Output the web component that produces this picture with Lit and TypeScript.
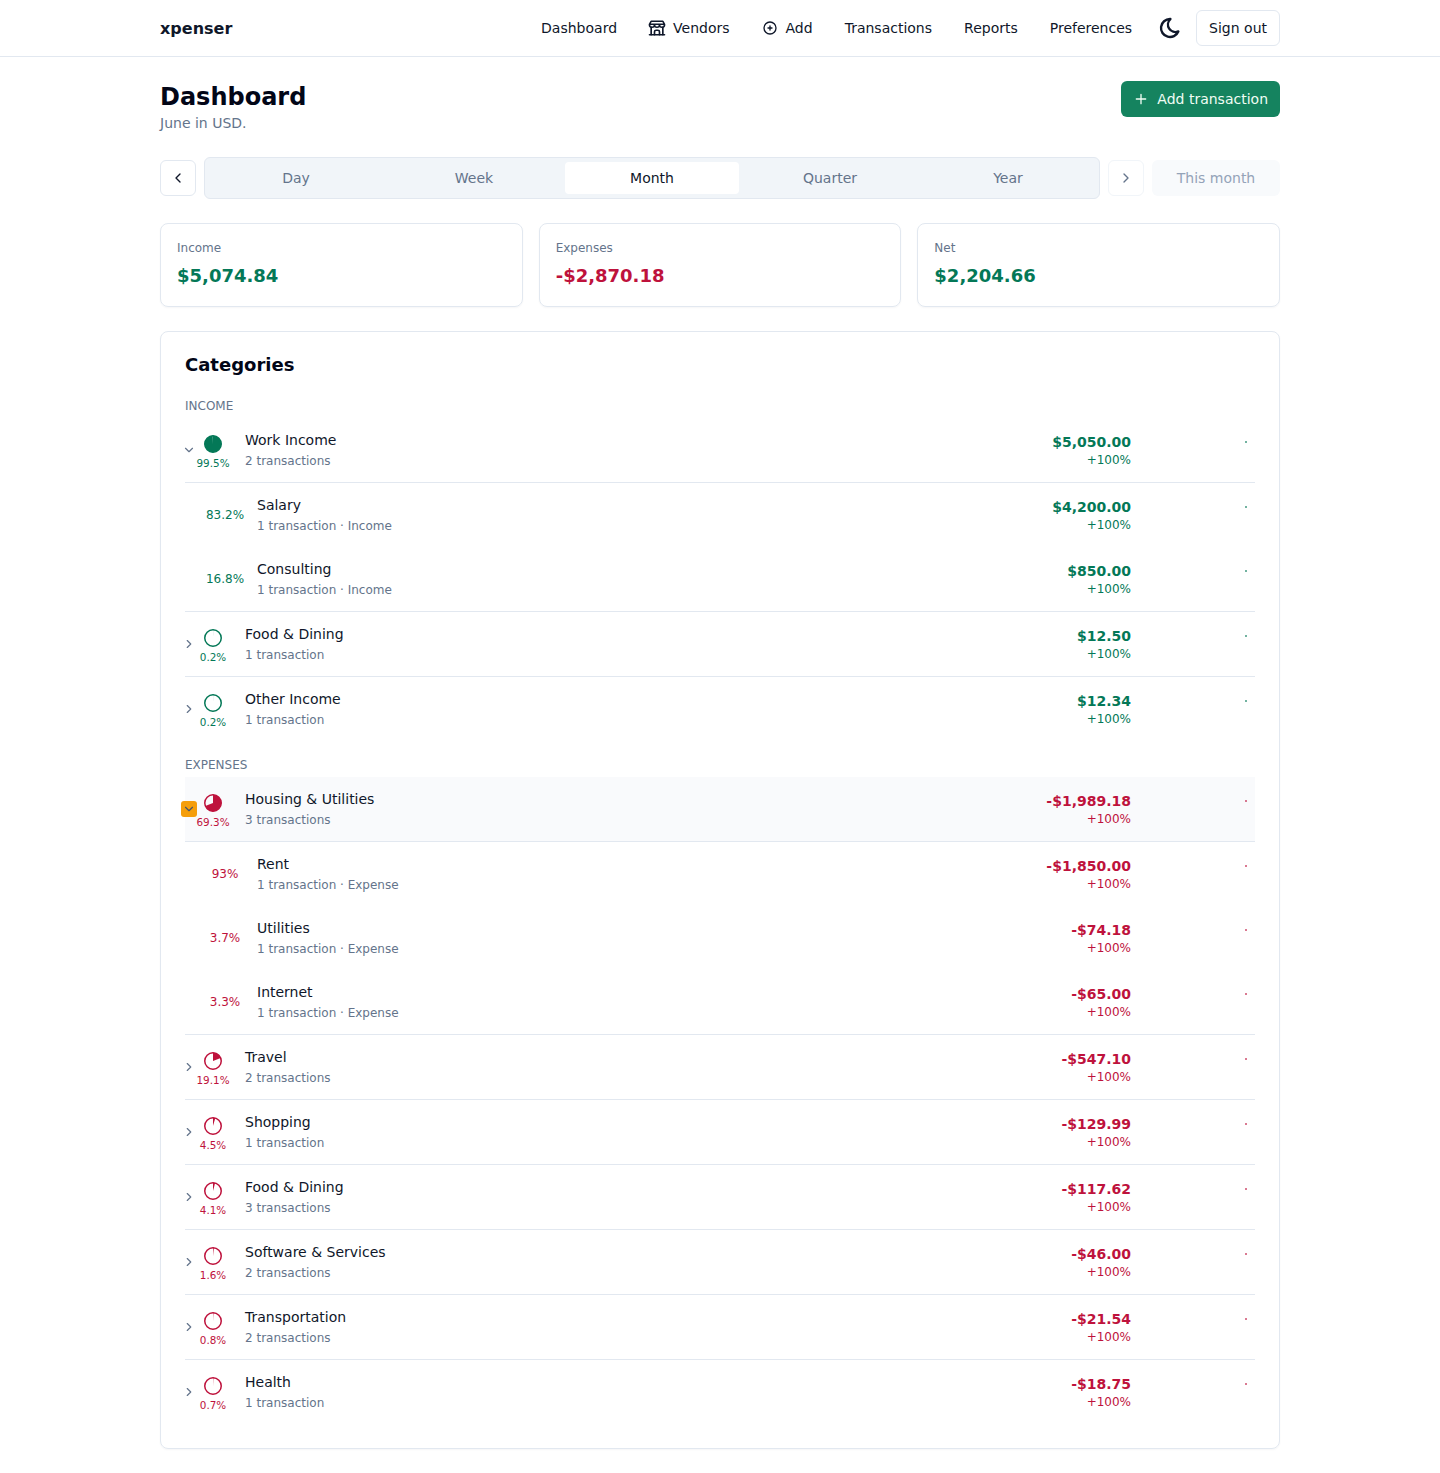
import { LitElement, html, css, svg } from 'lit';
import { customElement } from 'lit/decorators.js';

interface Sub {
  name: string;
  meta: string;
  pct: string;
  amount: string;
}

interface Cat {
  name: string;
  meta: string;
  pct: number;
  amount: string;
  subs?: Sub[];
  active?: boolean;
}

const income: Cat[] = [
  {
    name: 'Work Income',
    meta: '2 transactions',
    pct: 99.5,
    amount: '$5,050.00',
    subs: [
      { name: 'Salary', meta: '1 transaction · Income', pct: '83.2%', amount: '$4,200.00' },
      { name: 'Consulting', meta: '1 transaction · Income', pct: '16.8%', amount: '$850.00' },
    ],
  },
  { name: 'Food & Dining', meta: '1 transaction', pct: 0.2, amount: '$12.50' },
  { name: 'Other Income', meta: '1 transaction', pct: 0.2, amount: '$12.34' },
];

const expenses: Cat[] = [
  {
    name: 'Housing & Utilities',
    meta: '3 transactions',
    pct: 69.3,
    amount: '-$1,989.18',
    active: true,
    subs: [
      { name: 'Rent', meta: '1 transaction · Expense', pct: '93%', amount: '-$1,850.00' },
      { name: 'Utilities', meta: '1 transaction · Expense', pct: '3.7%', amount: '-$74.18' },
      { name: 'Internet', meta: '1 transaction · Expense', pct: '3.3%', amount: '-$65.00' },
    ],
  },
  { name: 'Travel', meta: '2 transactions', pct: 19.1, amount: '-$547.10' },
  { name: 'Shopping', meta: '1 transaction', pct: 4.5, amount: '-$129.99' },
  { name: 'Food & Dining', meta: '3 transactions', pct: 4.1, amount: '-$117.62' },
  { name: 'Software & Services', meta: '2 transactions', pct: 1.6, amount: '-$46.00' },
  { name: 'Transportation', meta: '2 transactions', pct: 0.8, amount: '-$21.54' },
  { name: 'Health', meta: '1 transaction', pct: 0.7, amount: '-$18.75' },
];

const chevron = (dir: 'left' | 'right' | 'down') => {
  const d = dir === 'left' ? 'M15 6l-6 6 6 6' : dir === 'right' ? 'M9 6l6 6-6 6' : 'M6 9l6 6 6-6';
  return html`<svg viewBox="0 0 24 24" fill="none" stroke="currentColor" stroke-width="2" stroke-linecap="round" stroke-linejoin="round"><path d=${d}></path></svg>`;
};

function pie(pct: number) {
  const a = (pct / 100) * Math.PI * 2;
  const x = 9 + 8.25 * Math.sin(a);
  const y = 9 - 8.25 * Math.cos(a);
  const large = pct > 50 ? 1 : 0;
  return html`<svg class="pie" viewBox="0 0 18 18" width="18" height="18">
    <circle cx="9" cy="9" r="8.25" fill="none" stroke="currentColor" stroke-width="1.5"></circle>
    ${svg`<path d="M9 9L9 0.75A8.25 8.25 0 ${large} 1 ${x} ${y}Z" fill="currentColor"></path>`}
  </svg>`;
}

@customElement('app-root')
export class AppRoot extends LitElement {
  static styles = css`
    :host {
      display: block;
      background: #fff;
      color: #0f172a;
      font-family: 'DejaVu Sans', sans-serif;
      font-size: 14px;
    }
    nav {
      height: 56px;
      border-bottom: 1px solid #e2e8f0;
    }
    .wrap {
      width: 1120px;
      margin: 0 auto;
    }
    nav .wrap {
      height: 56px;
      display: flex;
      align-items: center;
      justify-content: space-between;
    }
    .brand {
      font-size: 16px;
      font-weight: 700;
    }
    .links {
      display: flex;
      align-items: center;
      gap: 32px;
    }
    .link {
      display: flex;
      align-items: center;
      gap: 8px;
      line-height: 20px;
    }
    .link svg {
      width: 16px;
      height: 16px;
    }
    .link svg.store {
      width: 20px;
      height: 18px;
      margin: 0 -2px;
    }
    .nav-right {
      display: flex;
      align-items: center;
      gap: 14px;
      margin-left: -6px;
    }
    .moon {
      width: 24px;
      height: 24px;
      display: block;
    }
    .signout {
      height: 36px;
      box-sizing: border-box;
      padding: 0 12px;
      border: 1px solid #e2e8f0;
      border-radius: 6px;
      display: flex;
      align-items: center;
    }
    main {
      padding: 24px 0 24px;
    }
    .head {
      display: flex;
      justify-content: space-between;
      align-items: flex-start;
    }
    h1 {
      margin: 0;
      font-size: 24px;
      line-height: 32px;
      font-weight: 700;
      color: #020617;
    }
    .sub {
      color: #64748b;
      line-height: 20px;
    }
    .add {
      height: 36px;
      box-sizing: border-box;
      background: #15835f;
      color: #f0fdf4;
      border-radius: 6px;
      display: flex;
      align-items: center;
      gap: 8px;
      padding: 0 12px;
    }
    .add svg {
      width: 16px;
      height: 16px;
    }
    .periods {
      display: flex;
      align-items: center;
      gap: 8px;
      margin-top: 24px;
    }
    .arrow {
      width: 36px;
      height: 36px;
      box-sizing: border-box;
      border: 1px solid #e2e8f0;
      border-radius: 6px;
      display: flex;
      align-items: center;
      justify-content: center;
      flex: none;
    }
    .arrow svg {
      width: 16px;
      height: 16px;
    }
    .arrow.off {
      color: #64748b;
      border-color: #f1f5f9;
    }
    .tabs {
      flex: 1;
      height: 42px;
      box-sizing: border-box;
      display: grid;
      grid-template-columns: repeat(5, 1fr);
      gap: 4px;
      padding: 4px;
      background: #f1f5f9;
      border: 1px solid #e2e8f0;
      border-radius: 6px;
    }
    .tab {
      display: flex;
      align-items: center;
      justify-content: center;
      color: #64748b;
      border-radius: 4px;
    }
    .tab.on {
      background: #fff;
      color: #0f172a;
    }
    .this-month {
      width: 128px;
      height: 36px;
      display: flex;
      align-items: center;
      justify-content: center;
      background: #f8fafc;
      color: #94a3b8;
      border-radius: 6px;
      flex: none;
    }
    .cards {
      display: grid;
      grid-template-columns: repeat(3, 1fr);
      gap: 16px;
      margin-top: 24px;
    }
    .card {
      height: 84px;
      box-sizing: border-box;
      padding: 16px;
      border: 1px solid #e2e8f0;
      border-radius: 8px;
      box-shadow: 0 1px 2px rgba(15, 23, 42, 0.04);
    }
    .card .label {
      font-size: 12px;
      line-height: 16px;
      color: #64748b;
    }
    .card .value {
      font-size: 18px;
      line-height: 28px;
      font-weight: 700;
      margin-top: 6px;
    }
    .green {
      color: #047857;
    }
    .red {
      color: #be123c;
    }
    .panel {
      margin-top: 24px;
      padding: 24px;
      border: 1px solid #e2e8f0;
      border-radius: 8px;
      box-shadow: 0 1px 2px rgba(15, 23, 42, 0.04);
    }
    h2 {
      margin: 0;
      font-size: 18px;
      line-height: 18px;
      font-weight: 700;
      color: #020617;
    }
    .section {
      font-size: 12px;
      line-height: 16px;
      color: #64748b;
      margin: 16px 0 4px;
    }
    h2 + .section {
      margin-top: 24px;
    }
    .row {
      height: 65px;
      box-sizing: border-box;
      display: flex;
      align-items: flex-start;
      position: relative;
    }
    .row.bordered {
      border-bottom: 1px solid #e2e8f0;
    }
    .row.last {
      height: 64px;
    }
    .row.active {
      background: #f9fafc;
    }
    .toggle {
      width: 16px;
      height: 16px;
      margin: 24px 0 0 -4px;
      flex: none;
      display: flex;
      align-items: center;
      justify-content: center;
      color: #64748b;
      border-radius: 3px;
    }
    .toggle svg {
      width: 14px;
      height: 14px;
    }
    .toggle.focus {
      background: #f59e0b;
      color: #475569;
    }
    .ring {
      width: 32px;
      margin-top: 17px;
      flex: none;
      display: flex;
      flex-direction: column;
      align-items: center;
    }
    .pie {
      display: block;
    }
    .ring span {
      font-size: 10.4px;
      line-height: 12px;
      margin-top: 4px;
      white-space: nowrap;
    }
    .info {
      margin: 12px 0 0 16px;
    }
    .name {
      line-height: 20px;
    }
    .meta {
      font-size: 12px;
      line-height: 16px;
      color: #64748b;
      margin-top: 3px;
    }
    .row.child {
      height: 64px;
    }
    .row.child .pct {
      width: 40px;
      margin: 24px 0 0 20px;
      flex: none;
      text-align: center;
      font-size: 12px;
      line-height: 16px;
      white-space: nowrap;
    }
    .row.child .info {
      margin-left: 12px;
    }
    .nums {
      margin-left: auto;
      margin-right: 124px;
      text-align: right;
      padding-top: 14px;
    }
    .amt {
      font-weight: 700;
      line-height: 20px;
    }
    .chg {
      font-size: 12px;
      line-height: 16px;
    }
    .dot {
      position: absolute;
      left: 1060px;
      top: 23px;
      width: 2px;
      height: 2px;
      background: currentColor;
      border-radius: 50%;
      opacity: 0.75;
    }
    .group {
      border-bottom: 1px solid #e2e8f0;
    }
  `;

  private renderRow(c: Cat, tone: string, last: boolean) {
    const open = !!c.subs;
    return html`
      <div class="row ${last ? 'last' : 'bordered'} ${c.active ? 'active' : ''}">
        <div class="toggle ${c.active ? 'focus' : ''}">${chevron(open ? 'down' : 'right')}</div>
        <div class="ring ${tone}">
          ${pie(c.pct)}
          <span>${c.pct}%</span>
        </div>
        <div class="info">
          <div class="name">${c.name}</div>
          <div class="meta">${c.meta}</div>
        </div>
        <div class="nums ${tone}">
          <div class="amt">${c.amount}</div>
          <div class="chg">+100%</div>
        </div>
        <div class="dot ${tone}"></div>
      </div>
      ${open
        ? html`<div class="group">
            ${c.subs!.map(
              (s) => html`<div class="row child">
                <div class="pct ${tone}">${s.pct}</div>
                <div class="info">
                  <div class="name">${s.name}</div>
                  <div class="meta">${s.meta}</div>
                </div>
                <div class="nums ${tone}">
                  <div class="amt">${s.amount}</div>
                  <div class="chg">+100%</div>
                </div>
                <div class="dot ${tone}"></div>
              </div>`
            )}
          </div>`
        : ''}
    `;
  }

  render() {
    return html`
      <nav>
        <div class="wrap">
          <div class="brand">xpenser</div>
          <div class="links">
            <div class="link">Dashboard</div>
            <div class="link">
              <svg class="store" viewBox="0 0 24 24" preserveAspectRatio="none" fill="none" stroke="currentColor" stroke-width="2" stroke-linecap="round" stroke-linejoin="round">
                <path d="M3 21l18 0"></path>
                <path d="M3 7v1a3 3 0 0 0 6 0v-1m0 1a3 3 0 0 0 6 0v-1m0 1a3 3 0 0 0 6 0v-1h-18l2 -4h14l2 4"></path>
                <path d="M5 21l0 -10.15"></path>
                <path d="M19 21l0 -10.15"></path>
                <path d="M9 21v-4a2 2 0 0 1 2 -2h2a2 2 0 0 1 2 2v4"></path>
              </svg>
              Vendors
            </div>
            <div class="link">
              <svg viewBox="0 0 24 24" fill="none" stroke="currentColor" stroke-width="2" stroke-linecap="round" stroke-linejoin="round">
                <path d="M3 12a9 9 0 1 0 18 0a9 9 0 0 0 -18 0"></path>
                <path d="M9 12h6"></path>
                <path d="M12 9v6"></path>
              </svg>
              Add
            </div>
            <div class="link">Transactions</div>
            <div class="link">Reports</div>
            <div class="link">Preferences</div>
            <div class="nav-right">
              <svg class="moon" viewBox="0 0 24 24" fill="none" stroke="currentColor" stroke-width="2.4" stroke-linecap="round" stroke-linejoin="round">
                <path d="M12 3c.132 0 .263 0 .393 0a7.5 7.5 0 0 0 7.92 12.446a9 9 0 1 1 -8.313 -12.454z"></path>
              </svg>
              <div class="signout">Sign out</div>
            </div>
          </div>
        </div>
      </nav>
      <main class="wrap">
        <div class="head">
          <div>
            <h1>Dashboard</h1>
            <div class="sub">June in USD.</div>
          </div>
          <div class="add">
            <svg viewBox="0 0 24 24" fill="none" stroke="currentColor" stroke-width="2" stroke-linecap="round"><path d="M12 5v14M5 12h14"></path></svg>
            Add transaction
          </div>
        </div>
        <div class="periods">
          <div class="arrow">${chevron('left')}</div>
          <div class="tabs">
            ${['Day', 'Week', 'Month', 'Quarter', 'Year'].map(
              (t) => html`<div class="tab ${t === 'Month' ? 'on' : ''}">${t}</div>`
            )}
          </div>
          <div class="arrow off">${chevron('right')}</div>
          <div class="this-month">This month</div>
        </div>
        <div class="cards">
          <div class="card"><div class="label">Income</div><div class="value green">$5,074.84</div></div>
          <div class="card"><div class="label">Expenses</div><div class="value red">-$2,870.18</div></div>
          <div class="card"><div class="label">Net</div><div class="value green">$2,204.66</div></div>
        </div>
        <section class="panel">
          <h2>Categories</h2>
          <div class="section">INCOME</div>
          ${income.map((c, i) => this.renderRow(c, 'green', i === income.length - 1))}
          <div class="section">EXPENSES</div>
          ${expenses.map((c, i) => this.renderRow(c, 'red', i === expenses.length - 1))}
        </section>
      </main>
    `;
  }
}
